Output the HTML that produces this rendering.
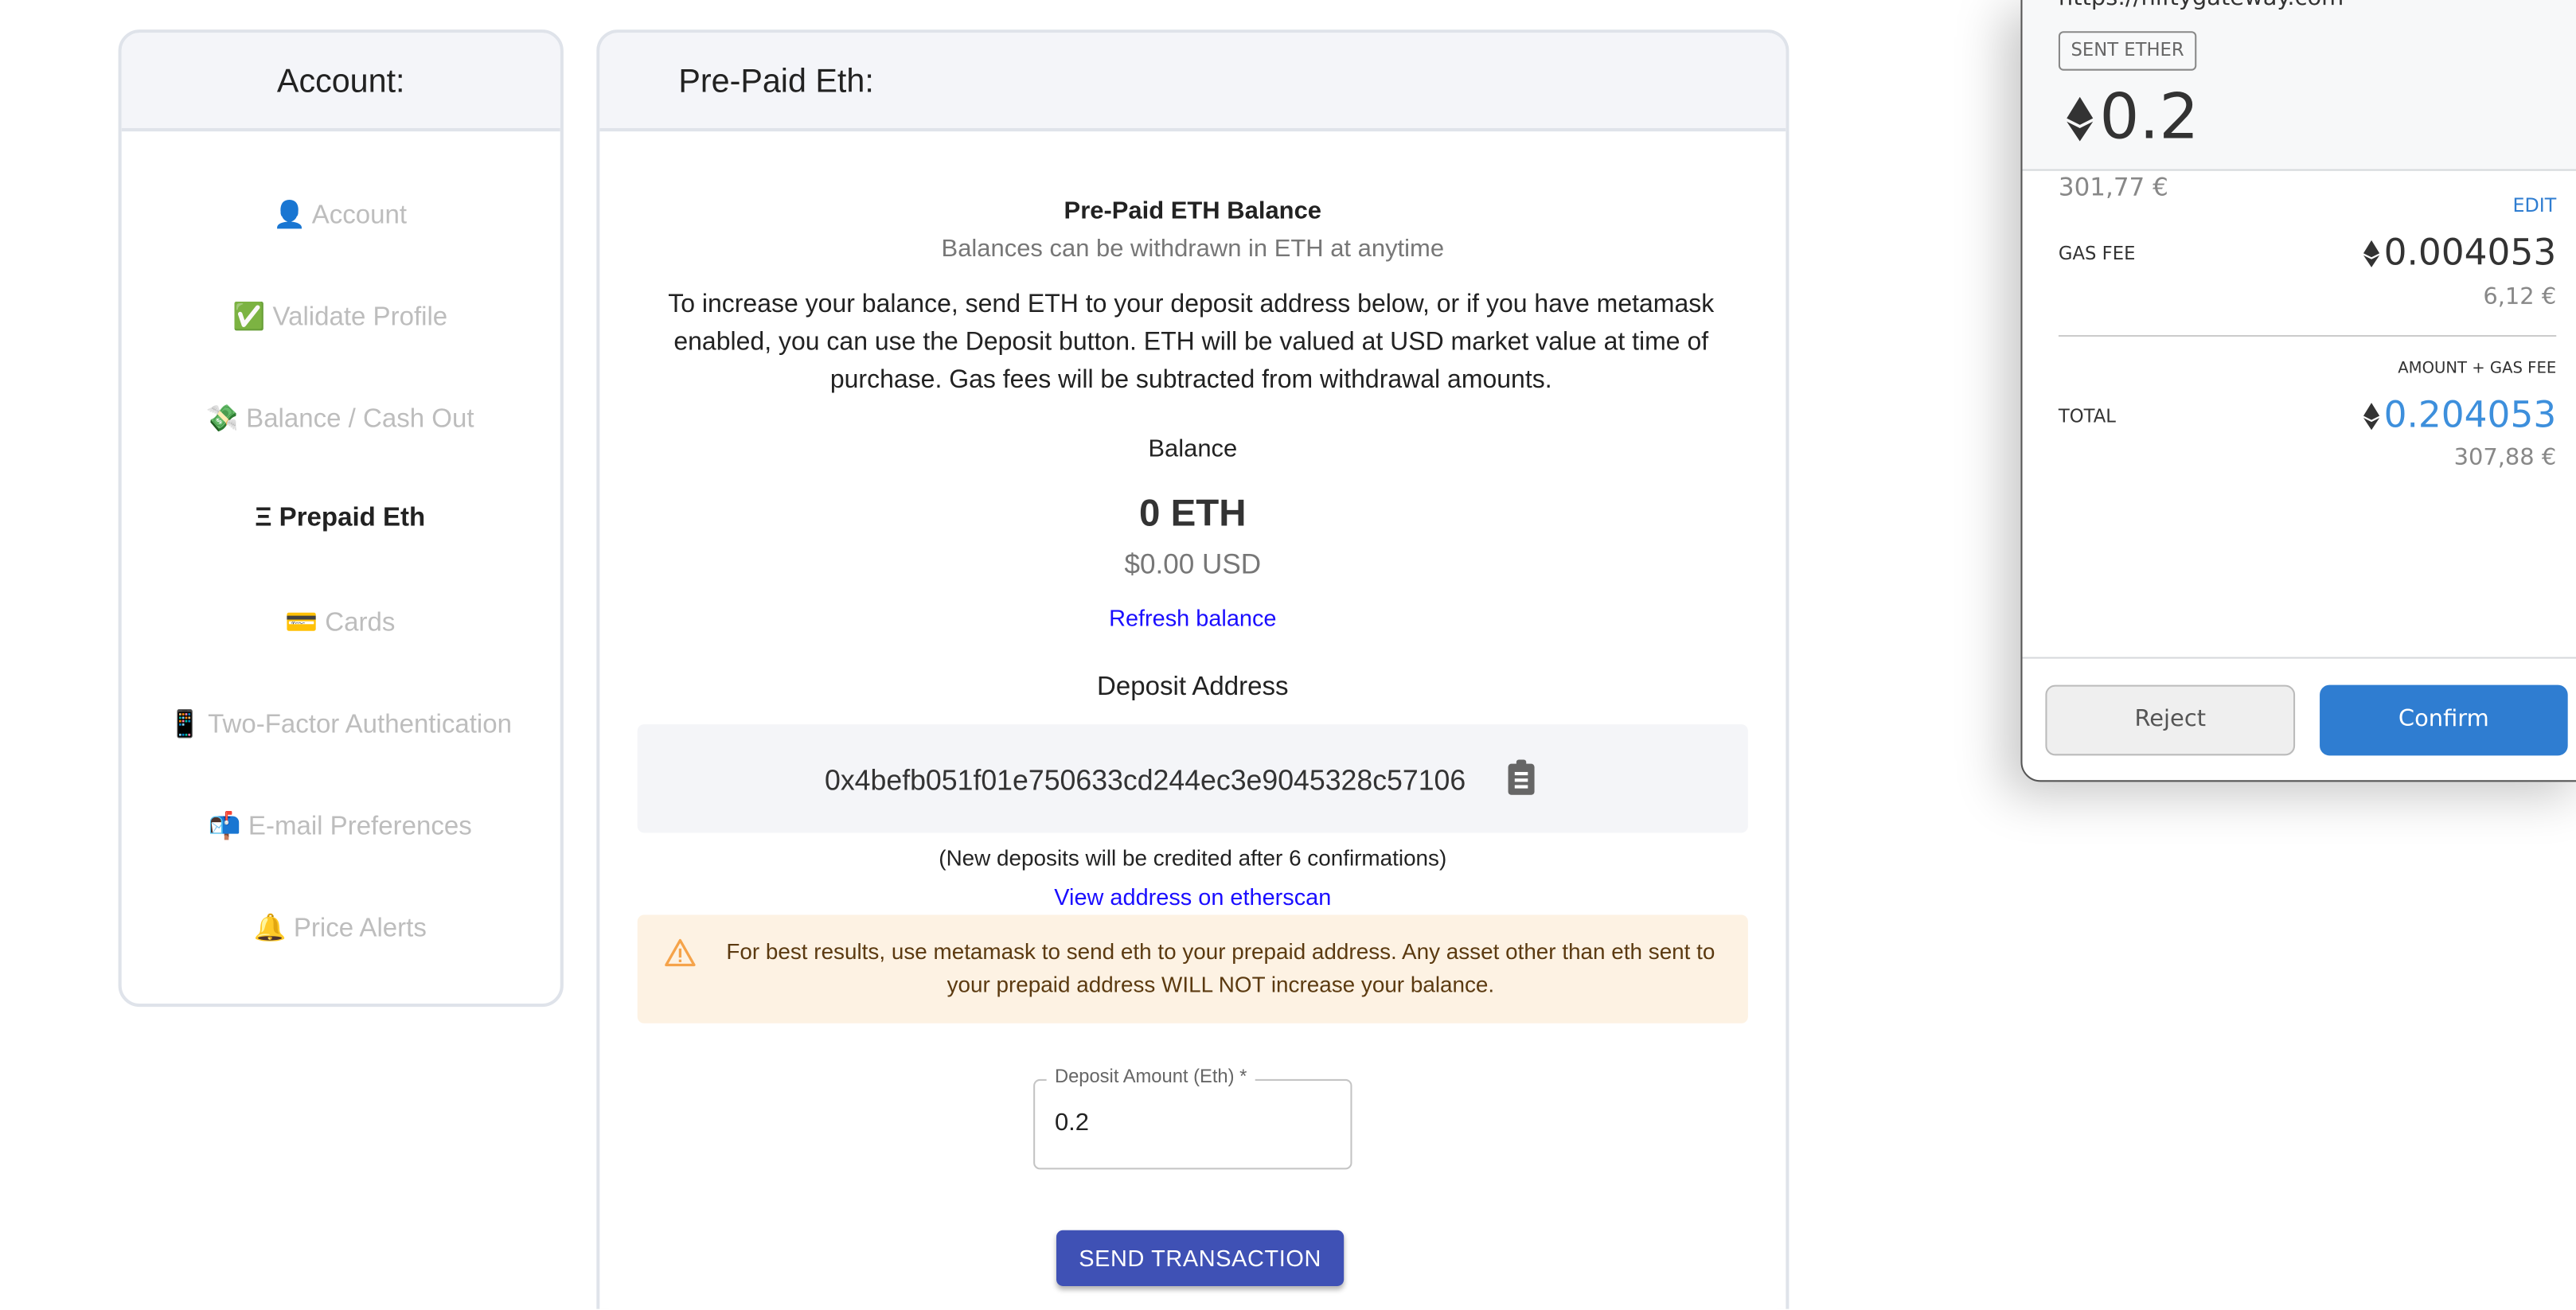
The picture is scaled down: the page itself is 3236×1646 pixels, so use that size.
<!DOCTYPE html>
<html><head><meta charset="utf-8"><style>
html,body{margin:0;padding:0;background:#fff;overflow:hidden;width:3236px;height:1646px}
#w{position:absolute;left:0;top:0;width:1568px;height:797px;overflow:hidden;transform:scale(2.06378);transform-origin:0 0;font-family:"Liberation Sans",sans-serif;color:#222}
.a{position:absolute}
.c{position:absolute;text-align:center;white-space:nowrap}
.card{position:absolute;border:2px solid #dfe3ea;border-radius:13px;background:#fff;overflow:hidden;box-sizing:border-box}
.hd{position:absolute;left:0;right:0;top:0;height:58px;background:#f4f5f9;border-bottom:2px solid #dfe3ea}
.nav{position:absolute;left:0;width:266px;text-align:center;font-size:16px;color:#bdbdbd}
.mm{font-family:"DejaVu Sans","Liberation Sans",sans-serif}
</style></head><body><div id="w">

<div class="card" style="left:72px;top:18px;width:271px;height:595px">
 <div class="hd"></div>
 <div class="c" style="left:0;width:267px;top:19px;font-size:20px">Account:</div>
 <div class="nav" style="top:101px">👤 Account</div>
 <div class="nav" style="top:163px">✅ Validate Profile</div>
 <div class="nav" style="top:225px">💸 Balance / Cash Out</div>
 <div class="nav" style="top:287px;color:#222;font-weight:bold">Ξ Prepaid Eth</div>
 <div class="nav" style="top:349px">💳 Cards</div>
 <div class="nav" style="top:411px">📱 Two-Factor Authentication</div>
 <div class="nav" style="top:473px">📬 E-mail Preferences</div>
 <div class="nav" style="top:535px">🔔 Price Alerts</div>
</div>

<div class="card" style="left:363px;top:18px;width:726px;height:779px;border-bottom:none;border-radius:13px 13px 0 0">
 <div class="hd"></div>
 <div class="a" style="left:48px;top:19px;font-size:20px">Pre-Paid Eth:</div>
</div>

<div class="c" style="left:364px;width:724px;top:120px;font-size:15px;font-weight:bold">Pre-Paid ETH Balance</div>
<div class="c" style="left:364px;width:724px;top:143px;font-size:15px;color:#777">Balances can be withdrawn in ETH at anytime</div>
<div class="a" style="left:385px;width:680px;top:174px;font-size:15.5px;line-height:23px;text-align:center">To increase your balance, send ETH to your deposit address below, or if you have metamask enabled, you can use the Deposit button. ETH will be valued at USD market value at time of purchase. Gas fees will be subtracted from withdrawal amounts.</div>
<div class="c" style="left:364px;width:724px;top:265px;font-size:15px">Balance</div>
<div class="c" style="left:364px;width:724px;top:299px;font-size:23px;font-weight:bold;color:#333">0 ETH</div>
<div class="c" style="left:364px;width:724px;top:334px;font-size:17px;color:#777">$0.00 USD</div>
<div class="c" style="left:364px;width:724px;top:368px;font-size:14px;color:#1a0dff">Refresh balance</div>
<div class="c" style="left:364px;width:724px;top:410px;font-size:16px">Deposit Address</div>
<div class="a" style="left:388px;top:441px;width:676px;height:66px;background:#f4f5f8;border-radius:4px"></div>
<div class="a" style="left:502px;top:465px;font-size:17.3px;color:#333;white-space:nowrap">0x4befb051f01e750633cd244ec3e9045328c57106</div>
<svg class="a" style="left:917px;top:462px" width="18" height="22" viewBox="0 0 18 22"><rect x="1" y="3" width="16" height="19" rx="2" fill="#666"/><rect x="6" y="0.5" width="6" height="4" rx="1.5" fill="#666"/><rect x="5" y="8" width="8" height="2" fill="#fff"/><rect x="5" y="12" width="8" height="2" fill="#fff"/><rect x="5" y="16" width="8" height="2" fill="#fff"/></svg>
<div class="c" style="left:364px;width:724px;top:515px;font-size:13.5px">(New deposits will be credited after 6 confirmations)</div>
<div class="c" style="left:364px;width:724px;top:538px;font-size:14px;color:#1a0dff">View address on etherscan</div>
<div class="a" style="left:388px;top:557px;width:676px;height:66px;background:#fdf2e3;border-radius:4px"></div>
<svg class="a" style="left:404px;top:571px" width="20" height="18" viewBox="0 0 20 18"><path d="M10 1.5L18.5 16.5H1.5Z" fill="none" stroke="#f5a34a" stroke-width="1.6" stroke-linejoin="round"/><rect x="9.2" y="6.5" width="1.6" height="5.5" fill="#f5a34a"/><rect x="9.2" y="13.2" width="1.6" height="1.6" fill="#f5a34a"/></svg>
<div class="a" style="left:432px;width:622px;top:570px;font-size:13.5px;line-height:20px;text-align:center;color:#5b3a10">For best results, use metamask to send eth to your prepaid address. Any asset other than eth sent to your prepaid address WILL NOT increase your balance.</div>
<div class="a" style="left:629px;top:657px;width:192px;height:53px;border:1px solid #c4c4c4;border-radius:4px"></div>
<div class="a" style="left:637px;top:650px;padding:0 5px;background:#fff;font-size:11.5px;color:#666">Deposit Amount (Eth) *</div>
<div class="a" style="left:642px;top:675px;font-size:15px">0.2</div>
<div class="a" style="left:643px;top:749px;width:175px;height:34px;background:#3f51b5;border-radius:4px;box-shadow:0 2px 3px rgba(0,0,0,.3);color:#fff;font-size:14px;line-height:34px;text-align:center;letter-spacing:.3px">SEND TRANSACTION</div>

<!-- metamask -->
<div class="a mm" style="left:1230px;top:-2px;width:345px;height:476px;background:#fff;border:1px solid #555;border-radius:0 0 0 12px;overflow:hidden;box-shadow:-10px 8px 30px rgba(0,0,0,.22)">
 <div class="a" style="left:0;top:0;right:0;height:104px;background:#f7f8f9;border-bottom:1px solid #d6d9dc"></div>
 <div class="a" style="left:22px;top:-8px;font-size:14px;color:#333">https://niftygateway.com</div>
 <div class="a" style="left:22px;top:20px;width:82px;height:22px;border:1px solid #888;border-radius:3px;font-size:11px;line-height:22px;text-align:center;color:#666">SENT ETHER</div>
 <svg class="a" style="left:26px;top:60px" width="18" height="27" viewBox="0 0 18 27"><path d="M9 0L17 13L9 17L1 13Z" fill="#333"/><path d="M1 15L9 19L17 15L9 27Z" fill="#333"/></svg>
 <div class="a" style="left:47px;top:50px;font-size:38px;color:#333">0.2</div>
 <div class="a" style="left:22px;top:106px;font-size:15px;color:#888">301,77 €</div>
 <div class="a" style="right:20px;top:119px;font-size:11.5px;color:#2f7dd1">EDIT</div>
 <div class="a" style="left:22px;top:149px;font-size:11px;color:#333">GAS FEE</div>
 <div class="a" style="right:20px;top:143px;font-size:22px;color:#333;white-space:nowrap;display:flex;align-items:center;gap:2px"><svg width="11" height="17" viewBox="0 0 18 27"><path d="M9 0L17 13L9 17L1 13Z" fill="#333"/><path d="M1 15L9 19L17 15L9 27Z" fill="#333"/></svg>0.004053</div>
 <div class="a" style="right:20px;top:174px;font-size:14px;color:#888">6,12 €</div>
 <div class="a" style="left:22px;right:20px;top:205px;border-top:1px solid #ccc"></div>
 <div class="a" style="right:20px;top:220px;font-size:9.5px;color:#333">AMOUNT + GAS FEE</div>
 <div class="a" style="left:22px;top:248px;font-size:11px;color:#333">TOTAL</div>
 <div class="a" style="right:20px;top:242px;font-size:22px;color:#3d8fdc;white-space:nowrap;display:flex;align-items:center;gap:2px"><svg width="11" height="17" viewBox="0 0 18 27"><path d="M9 0L17 13L9 17L1 13Z" fill="#333"/><path d="M1 15L9 19L17 15L9 27Z" fill="#333"/></svg>0.204053</div>
 <div class="a" style="right:20px;top:272px;font-size:14px;color:#888">307,88 €</div>
 <div class="a" style="left:0;right:0;top:401px;border-top:1px solid #d6d9dc"></div>
 <div class="a" style="left:14px;top:418px;width:152px;height:43px;box-sizing:border-box;background:#efefef;border:1px solid #bbb;border-radius:6px;text-align:center;line-height:41px;font-size:14px;color:#555">Reject</div>
 <div class="a" style="left:181px;top:418px;width:151px;height:43px;background:#2f7dd1;border-radius:6px;text-align:center;line-height:43px;font-size:14px;color:#fff">Confirm</div>
</div>
</div></body></html>
